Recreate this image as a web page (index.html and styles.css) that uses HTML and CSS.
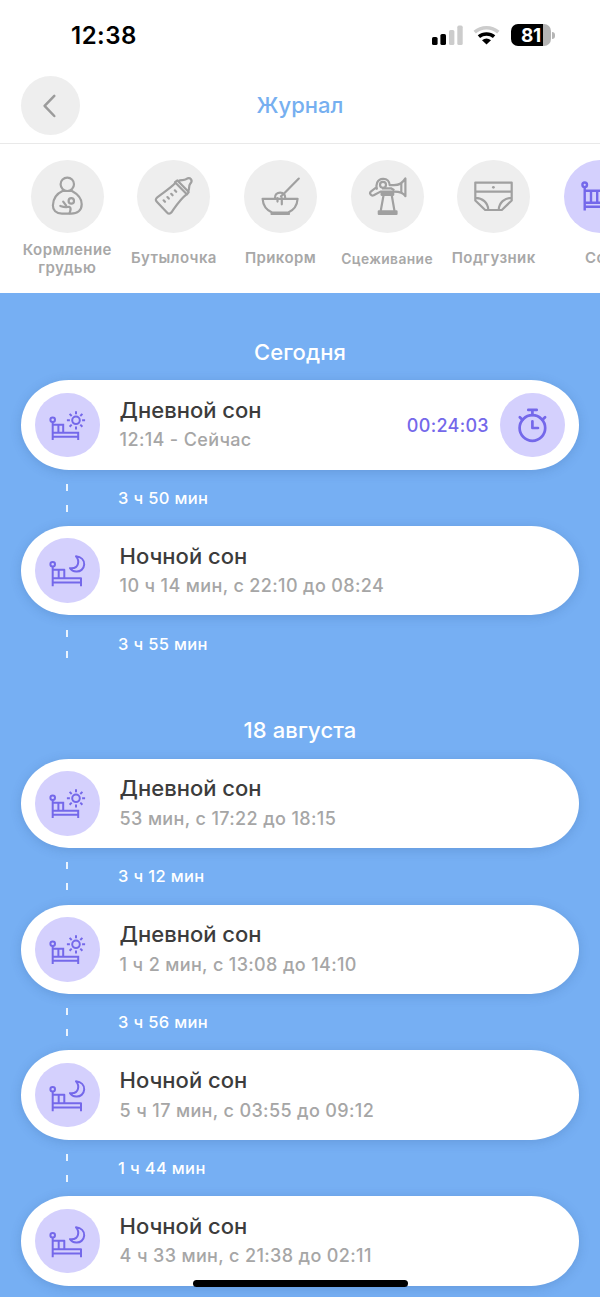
FILE: index.html
```html
<!DOCTYPE html>
<html lang="ru">
<head>
<meta charset="utf-8">
<title>Журнал</title>
<link rel="stylesheet" href="styles.css">
</head>
<body>
<svg class="sprite" aria-hidden="true">
  <symbol id="day" viewBox="0 0 64.6 64.6">
    <g fill="none" stroke="currentColor" stroke-width="2">
      <circle cx="17.7" cy="26.7" r="2.3"/>
      <path d="M17.7 29V47M17.7 39.7H43.2V47M17.7 43.7H43.2M18 31.7H28.2V39.7M23.4 31.7V39.7"/>
      <circle cx="41" cy="27.3" r="3.8"/>
      <path d="M41 18.2V21.2M41 33.4V36.4M31.9 27.3H34.9M47.1 27.3H50.1M34.6 20.9L36.7 23M45.3 31.6L47.4 33.7M47.4 20.9L45.3 23M36.7 31.6L34.6 33.7"/>
    </g>
  </symbol>
  <symbol id="night" viewBox="0 0 64.6 64.6">
    <g fill="none" stroke="currentColor" stroke-width="2" stroke-linejoin="round">
      <circle cx="17.7" cy="26.2" r="2.3"/>
      <path d="M17.7 28.5V48.3M17.7 40.2H46V48.3M17.7 44.6H46M18 31.7H29.3V40.2M23.7 31.7V40.2"/>
      <path d="M41 18.3C46 19 49.5 22.2 49.2 26.6C48.8 31.2 45.3 33.8 41.2 33.5C38.4 33.3 36.2 32 35 30.2C39.2 30.7 42.2 29 43 25.8C43.7 22.9 42.9 20.4 41 18.3Z"/>
    </g>
  </symbol>
</svg>

<div class="screen">
  <header class="top">
    <div class="status">
      <span class="clock">12:38</span>
      <div class="indicators">
        <svg class="signal" viewBox="0 0 32 20">
          <rect x="0" y="12" width="5.6" height="8" rx="1.6"/>
          <rect x="8.4" y="9" width="5.6" height="11" rx="1.6"/>
          <rect x="17" y="5" width="5.4" height="15" rx="1.6" fill="#ccc"/>
          <rect x="25.3" y="0.6" width="5.4" height="19.4" rx="1.6" fill="#ccc"/>
        </svg>
        <svg class="wifi" viewBox="0 0 28 20">
          <g fill="none" stroke-width="3.6">
            <path d="M1.7 7.1A18 18 0 0 1 25.3 7.1" stroke="#ccc"/>
            <path d="M5.9 11.7A11.8 11.8 0 0 1 21.1 11.7" stroke="#000"/>
          </g>
          <path d="M13.5 19.6L9 15.2Q13.5 11.7 18 15.2Z"/>
        </svg>
        <div class="battery"><span class="battery-body">81</span><span class="battery-cap"></span></div>
      </div>
    </div>
    <div class="titlebar">
      <button class="back" aria-label="Назад"><svg viewBox="0 0 59 59"><path d="M33.3 19.8L23.6 29.8L33.3 40" fill="none" stroke="#9b9b9b" stroke-width="2.5" stroke-linecap="round" stroke-linejoin="round"/></svg></button>
      <h1 class="title">Журнал</h1>
      <span></span>
    </div>
  </header>

  <nav class="tabs">
    <div class="tab">
      <svg class="tab-icon" viewBox="0 0 73 73"><g fill="none" stroke="currentColor" stroke-width="2.2" stroke-linecap="round" stroke-linejoin="round">
        <circle cx="36.3" cy="24.3" r="6.7"/>
        <path d="M31.5 31H41C46.5 34 50.7 38.8 50.7 44.2C50.7 50 46.8 54 39 53.6H31C25 53.6 21.8 50.2 21.9 45.5C22 39.7 25 34 31.5 31Z"/>
        <circle cx="40.3" cy="40.9" r="2.7"/>
        <path d="M29.3 46C32 47 36 47.4 38.2 46.8C40.5 47.6 39.6 50 38.6 53.2M32.2 41.6L35.2 45.7"/>
      </g></svg>
      <span class="tab-label label-two">Кормление<br>грудью</span>
    </div>
    <div class="tab">
      <svg class="tab-icon" viewBox="0 0 73 73"><g fill="none" stroke="currentColor" stroke-width="2.2" stroke-linecap="round" stroke-linejoin="round">
        <path d="M38.5 22.8C34 27.8 27.5 31.8 20.3 37.3Q17.6 39.5 19.8 41.7L30 52.5Q32.3 55 34.5 52.3C39 46 43 39.5 49.8 34.2Z"/>
        <path d="M38 22.2L40.4 20.5L51.7 32.1L50 34.3M41.3 21.2C44 19.4 46.8 21 49.2 19.2C51.4 17.6 52.7 17.8 54 19.2C55.1 20.6 54.8 22 53.2 23.8C51.2 26.3 53 28.5 51.2 31.2"/>
        <path d="M26.6 40.3L28 41.8M30.4 37.1L31.8 38.6M34.2 33.8L35.6 35.3M37.8 30.3L39.2 31.8"/>
      </g></svg>
      <span class="tab-label">Бутылочка</span>
    </div>
    <div class="tab">
      <svg class="tab-icon" viewBox="0 0 73 73"><g fill="none" stroke="currentColor" stroke-width="2.2" stroke-linecap="round" stroke-linejoin="round">
        <path d="M18.6 38.8H53.6C53.2 45 50 50 44.3 52.5H28C22.2 50 19 45 18.6 38.8ZM27.5 53.9H45"/>
        <path d="M31 38C30.8 34.8 33 32.6 36.2 32.6C39.4 32.6 41.5 34.8 41.2 38M33.5 38V41.6M37.8 38V44.3M37 36.4L40.3 33.3L54.8 18.6"/>
      </g></svg>
      <span class="tab-label">Прикорм</span>
    </div>
    <div class="tab">
      <svg class="tab-icon" viewBox="0 0 73 73"><g fill="none" stroke="currentColor" stroke-width="2.2" stroke-linejoin="round">
        <circle cx="32" cy="24.8" r="3"/>
        <path d="M26 29.7C24.5 25 26 19 32 18.8C36 18.6 38.5 21.2 38.7 25.2H43C48 25.2 52 22.5 54.4 18.4V36.2C52 32 48.2 31.6 43.2 31.6H29.5L22.7 35.2C20.4 36.3 17.8 33.7 19.8 31.6L25.7 27"/>
        <path d="M31 28.3H40L43.3 30.3M50.3 23V33M32.6 35L29.7 51M40.7 35L43.5 51"/>
        <path d="M30.6 32H42.2V34.8H30.6ZM27.8 51.3H45.5V53.9H27.8Z" fill="currentColor"/>
      </g></svg>
      <span class="tab-label label-small">Сцеживание</span>
    </div>
    <div class="tab">
      <svg class="tab-icon" viewBox="0 0 73 73"><g fill="none" stroke="currentColor" stroke-width="2.2" stroke-linejoin="round">
        <path d="M18.3 22.6H54.7V40.5L44.8 50H28.2L18.3 40.5ZM18.3 31.7H54.7M18.3 37.8C25.5 38 31 42.5 31.3 50M54.7 37.8C47.5 38 42 42.5 41.7 50"/>
      </g><circle cx="36.4" cy="27.3" r="1.4" fill="currentColor"/></svg>
      <span class="tab-label">Подгузник</span>
    </div>
    <div class="tab">
      <svg class="tab-icon active" viewBox="0 0 73 73"><g fill="none" stroke="currentColor" stroke-width="2.4">
        <circle cx="20.7" cy="24.8" r="2.3"/>
        <path d="M20.7 27.5V50.5M20.7 30.7H53V50.5M20.7 42.7H53M20.7 46.8H53M27 30.7V42.7M33.2 30.7V42.7M39.5 30.7V42.7M46 30.7V42.7"/>
      </g></svg>
      <span class="tab-label">Сон</span>
    </div>
  </nav>

  <main class="journal">
    <h2 class="date">Сегодня</h2>
    <article class="card">
      <svg class="badge"><use href="#day"/></svg>
      <div class="info"><h3 class="name">Дневной сон</h3><p class="time">12:14 - Сейчас</p></div>
      <span class="timer">00:24:03</span>
      <svg class="badge" viewBox="0 0 64.6 64.6"><g fill="none" stroke="currentColor" stroke-width="2.7" stroke-linecap="round" stroke-linejoin="round">
        <circle cx="32.4" cy="35" r="12.8"/>
        <path d="M28.3 16.9H36.7M32.4 17V22M19.8 24.2L22.4 26.8M45.1 24.2L42.4 26.8M32.4 28.3V35H38"/>
      </g></svg>
    </article>
    <div class="gap"><i class="dashes"></i><span>3 ч 50 мин</span></div>
    <article class="card">
      <svg class="badge"><use href="#night"/></svg>
      <div class="info"><h3 class="name">Ночной сон</h3><p class="time">10 ч 14 мин, с 22:10 до 08:24</p></div>
    </article>
    <div class="gap"><i class="dashes"></i><span>3 ч 55 мин</span></div>

    <h2 class="date">18 августа</h2>
    <article class="card">
      <svg class="badge"><use href="#day"/></svg>
      <div class="info"><h3 class="name">Дневной сон</h3><p class="time">53 мин, с 17:22 до 18:15</p></div>
    </article>
    <div class="gap"><i class="dashes"></i><span>3 ч 12 мин</span></div>
    <article class="card">
      <svg class="badge"><use href="#day"/></svg>
      <div class="info"><h3 class="name">Дневной сон</h3><p class="time">1 ч 2 мин, с 13:08 до 14:10</p></div>
    </article>
    <div class="gap"><i class="dashes"></i><span>3 ч 56 мин</span></div>
    <article class="card">
      <svg class="badge"><use href="#night"/></svg>
      <div class="info"><h3 class="name">Ночной сон</h3><p class="time">5 ч 17 мин, с 03:55 до 09:12</p></div>
    </article>
    <div class="gap"><i class="dashes"></i><span>1 ч 44 мин</span></div>
    <article class="card">
      <svg class="badge"><use href="#night"/></svg>
      <div class="info"><h3 class="name">Ночной сон</h3><p class="time">4 ч 33 мин, с 21:38 до 02:11</p></div>
    </article>
  </main>
  <div class="home-indicator"></div>
</div>
</body>
</html>
```
FILE: styles.css
```css
* { box-sizing: border-box; }
body, h1, h2, h3, p { margin: 0; }
body { font-family: Inter, "Noto Sans", sans-serif; background: #76aff3; }
.sprite { position: absolute; width: 0; height: 0; }
.screen { position: relative; width: 600px; height: 1297px; overflow: hidden; background: #76aff3; }

.top { height: 144px; background: #fff; border-bottom: 1px solid #e9e9e9; }
.status { height: 75.5px; padding: 24px 45.5px 0 71px; display: flex; justify-content: space-between; align-items: flex-start; }
.clock { font-size: 24px; line-height: 23px; font-weight: 600; letter-spacing: .5px; color: #000; }
.indicators { display: flex; align-items: flex-start; }
.signal { width: 32px; height: 20px; margin: 1px 9px 0 0; }
.wifi { width: 28px; height: 20px; margin: 1px 9.5px 0 0; }
.battery { display: flex; align-items: center; gap: 1.5px; }
.battery-body { width: 40px; height: 22px; padding-left: 1px; border-radius: 7px; background: linear-gradient(90deg, #000 32px, #b5b5b5 32px); color: #fff; font-size: 19px; line-height: 24px; font-weight: 700; text-align: center; letter-spacing: -0.3px; }
.battery-cap { width: 2.5px; height: 7px; border-radius: 0 3px 3px 0; background: #b5b5b5; }

.titlebar { display: grid; grid-template-columns: 59px 1fr 59px; align-items: center; padding: 0 21px; height: 59px; }
.back { width: 59px; height: 59px; padding: 0; border: 0; border-radius: 50%; background: #eee; }
.back svg { display: block; width: 59px; height: 59px; }
.title { padding-bottom: 1px; text-align: center; font-size: 22px; line-height: 28px; font-weight: 550; color: #76aff0; }

.tabs { display: flex; height: 149px; padding: 16px 0 0 14px; background: #fff; overflow: hidden; }
.tab { flex: 0 0 106.6px; display: flex; flex-direction: column; align-items: center; }
.tab-icon { width: 73px; height: 73px; flex: none; border-radius: 50%; background: #eee; color: #a0a0a0; }
.tab-icon.active { background: #d4d0fd; color: #7468ea; }
.tab-label { height: 50px; display: flex; align-items: center; text-align: center; font-size: 15px; line-height: 18px; font-weight: 600; letter-spacing: .4px; color: #a8a8a8; white-space: nowrap; }
.label-two { padding-top: 2px; }
.label-small { font-size: 13.8px; padding-top: 2px; }

.journal { padding: 0 21px; }
.date { height: 87px; padding-top: 44.8px; text-align: center; font-size: 22px; line-height: 28px; font-weight: 550; letter-spacing: .1px; color: #fff; }
.card { display: flex; align-items: center; height: 89.6px; padding: 0 14px; border-radius: 48px / 44.8px; background: #fff; box-shadow: 0 2px 11px rgba(40, 80, 140, .22); }
.badge { flex: none; width: 64.6px; height: 64.6px; border-radius: 50%; background: #d4d0fd; color: #7468ea; }
.info { flex: 1; padding: 1.4px 0 0 20px; white-space: nowrap; }
.name { font-size: 22px; line-height: 29.5px; font-weight: 550; letter-spacing: 0; color: #3c3c3c; }
.time { font-size: 18px; line-height: 30px; font-weight: 500; letter-spacing: .36px; color: #a6a6a6; }
.timer { margin-right: 11.5px; padding-top: 1px; font-size: 18px; font-weight: 550; letter-spacing: .3px; color: #7468ea; }
.gap { display: flex; align-items: center; height: 56.25px; padding-left: 45px; color: #fff; font-size: 16.5px; font-weight: 550; letter-spacing: .35px; }
.dashes { width: 1.5px; height: 28px; margin-right: 50.5px; background: linear-gradient(#eaf3fd 7px, transparent 7px, transparent 21px, #eaf3fd 21px); }
.home-indicator { position: absolute; left: 193px; top: 1279.5px; width: 214.5px; height: 7px; border-radius: 4px; background: #000; }
```
